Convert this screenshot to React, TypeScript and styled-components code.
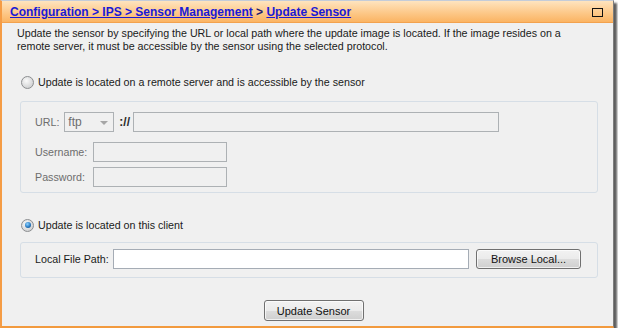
import React from "react";
import styled, { createGlobalStyle } from "styled-components";

const GlobalStyle = createGlobalStyle`
  html, body {
    margin: 0;
    padding: 0;
    background: #ffffff;
  }
  body {
    font-family: "Liberation Sans", Arial, sans-serif;
    font-size: 10.7px;
    color: #1e1e1e;
  }
`;

const Window = styled.div`
  width: 614px;
  box-sizing: border-box;
  border-left: 2px solid #f59c45;
  border-right: 1px solid #7d7d7d;
  border-bottom: 2px solid #f29a3e;
  border-top: 1px solid #c4ccd8;
  background: #f0f0f0;
  box-shadow: 3px 3px 2px rgba(40, 40, 40, 0.75);
`;

const Header = styled.div`
  height: 21px;
  display: flex;
  align-items: center;
  justify-content: space-between;
  padding: 0 10px 0 8px;
  background: linear-gradient(#fee4bf, #fdc98a 55%, #fbb463);
  border-bottom: 1px solid #f3a24e;
`;

const Crumbs = styled.div`
  font-size: 12px;
  font-weight: bold;
  color: #1d1d8c;
  white-space: nowrap;
`;

const Crumb = styled.a`
  color: #1a1ad6;
  text-decoration: underline;
`;

const Sep = styled.span`
  color: #1d1d6e;
`;

const MaxBox = styled.span`
  width: 9px;
  height: 7px;
  border: 1px solid #111;
  margin-top: 2px;
`;

const Body = styled.div`
  padding: 4px 15px 5px 15px;
  display: flex;
  flex-direction: column;
`;

const Intro = styled.p`
  margin: 0;
  line-height: 13px;
  color: #1a1a1a;
`;

const RadioRow = styled.label<{ $top: number }>`
  display: flex;
  align-items: center;
  gap: 4px;
  margin: ${(p) => p.$top}px 0 0 4px;
  height: 14px;
  color: #1a1a1a;
`;

const Radio = styled.span<{ $on?: boolean }>`
  width: 11px;
  height: 11px;
  border-radius: 50%;
  border: 1px solid #8c8e90;
  background: radial-gradient(circle at 40% 35%, #fafafa, #d9dadb 60%, #c4c6c8);
  display: flex;
  align-items: center;
  justify-content: center;

  &::after {
    content: "";
    display: ${(p) => (p.$on ? "block" : "none")};
    width: 6px;
    height: 6px;
    border-radius: 50%;
    background: radial-gradient(circle at 40% 35%, #8fd3ff, #2a7cc4 55%, #0d3d6e);
  }
`;

const Group = styled.div<{ $top: number; $pad: string }>`
  margin: ${(p) => p.$top}px 0 0 3px;
  border: 1px solid #d6dee6;
  border-radius: 3px;
  padding: ${(p) => p.$pad};
  display: flex;
  flex-direction: column;
`;

const FieldRow = styled.div<{ $top?: number }>`
  display: flex;
  align-items: center;
  margin-top: ${(p) => p.$top ?? 0}px;
  height: 20px;
`;

const Label = styled.span<{ $w?: number; $off?: boolean }>`
  width: ${(p) => (p.$w ? `${p.$w}px` : "auto")};
  flex: none;
  color: ${(p) => (p.$off ? "#6d6d6d" : "#1a1a1a")};
`;

const TextBox = styled.div<{ $w: number; $off?: boolean }>`
  width: ${(p) => p.$w}px;
  height: 20px;
  box-sizing: border-box;
  border: 1px solid ${(p) => (p.$off ? "#adb1b4" : "#a5acb5")};
  background: ${(p) => (p.$off ? "#f0f0f0" : "#ffffff")};
  flex: none;
`;

const Select = styled.div`
  width: 50px;
  height: 20px;
  box-sizing: border-box;
  border: 1px solid #adb1b4;
  margin-left: 5px;
  padding: 0 5px 0 3px;
  display: flex;
  align-items: center;
  justify-content: space-between;
  color: #6d6d6d;
  font-size: 12px;
`;

const Caret = styled.span`
  width: 0;
  height: 0;
  border-left: 4px solid transparent;
  border-right: 4px solid transparent;
  border-top: 4px solid #a6a6a6;
  margin-top: 2px;
`;

const Scheme = styled.span`
  font-weight: bold;
  color: #2a2a2a;
  margin: 0 3px 0 5px;
  font-size: 12px;
`;

const Button = styled.button<{ $w: number; $h: number }>`
  width: ${(p) => p.$w}px;
  height: ${(p) => p.$h}px;
  box-sizing: border-box;
  border: 1px solid #707070;
  border-radius: 3px;
  background: linear-gradient(#f2f2f2, #ebebeb 50%, #dddddd 50%, #cfcfcf);
  box-shadow: inset 0 0 0 1px rgba(255, 255, 255, 0.7);
  font-family: "Liberation Sans", Arial, sans-serif;
  font-size: 11px;
  color: #111;
  padding: 0;
  flex: none;
`;

const Footer = styled.div`
  display: flex;
  justify-content: center;
  padding-left: 12px;
  margin-top: 22px;
`;

export default function App() {
  return (
    <>
      <GlobalStyle />
      <Window>
        <Header>
          <Crumbs>
            <Crumb>Configuration &gt; IPS &gt; Sensor Management</Crumb>
            <Sep> &gt; </Sep>
            <Crumb>Update Sensor</Crumb>
          </Crumbs>
          <MaxBox />
        </Header>
        <Body>
          <Intro>
            Update the sensor by specifying the URL or local path where the update image is located. If the image resides on a
            <br />
            remote server, it must be accessible by the sensor using the selected protocol.
          </Intro>

          <RadioRow $top={22}>
            <Radio />
            Update is located on a remote server and is accessible by the sensor
          </RadioRow>
          <Group $top={12} $pad="10px 0 5px 14px">
            <FieldRow>
              <Label $off>URL:</Label>
              <Select>
                ftp
                <Caret />
              </Select>
              <Scheme>://</Scheme>
              <TextBox $w={366} $off />
            </FieldRow>
            <FieldRow $top={10}>
              <Label $w={58} $off>Username:</Label>
              <TextBox $w={134} $off />
            </FieldRow>
            <FieldRow $top={5}>
              <Label $w={58} $off>Password:</Label>
              <TextBox $w={134} $off />
            </FieldRow>
          </Group>

          <RadioRow $top={25}>
            <Radio $on />
            Update is located on this client
          </RadioRow>
          <Group $top={10} $pad="6px 0 8px 14px">
            <FieldRow>
              <Label $w={78}>Local File Path:</Label>
              <TextBox $w={356} />
              <Button $w={105} $h={20} style={{ marginLeft: 7 }}>Browse Local...</Button>
            </FieldRow>
          </Group>

          <Footer>
            <Button $w={100} $h={21}>Update Sensor</Button>
          </Footer>
        </Body>
      </Window>
    </>
  );
}
